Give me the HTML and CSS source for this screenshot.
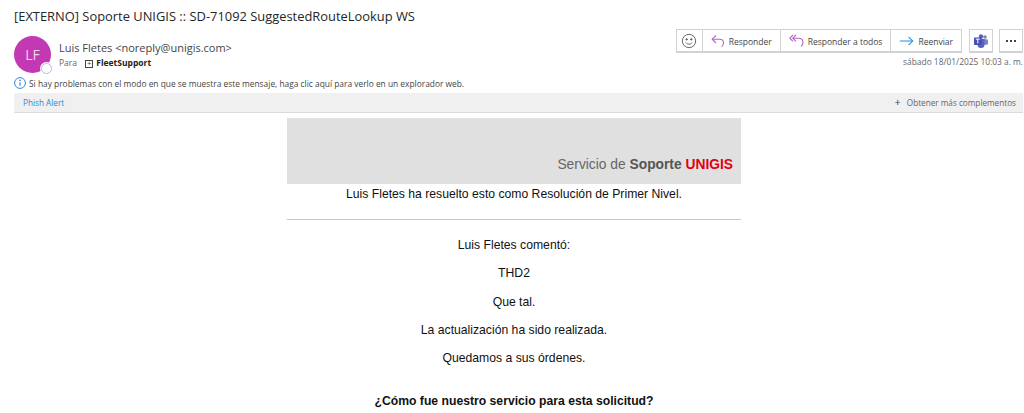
FILE: index.html
```html
<!DOCTYPE html>
<html lang="es">
<head>
    <meta charset="UTF-8">
    <meta name="viewport" content="width=device-width, initial-scale=1.0">
    <title>Soporte UNIGIS</title>
    <link rel="stylesheet" href="styles.css">
</head>
<body>
    <h1 class="subject">[EXTERNO] Soporte UNIGIS :: SD-71092 SuggestedRouteLookup WS</h1>

    <div class="header">
        <div class="sender">
            <div class="avatar">LF<span class="presence"></span></div>
            <div class="sender-info">
                <div class="from">Luis Fletes &lt;noreply@unigis.com&gt;</div>
                <div class="to">Para <span class="expand">+</span><b>FleetSupport</b></div>
            </div>
        </div>
        <div class="actions">
            <div class="toolbar">
                <div class="btn-group">
                    <button class="btn btn-icon">
                        <svg width="16" height="16" viewBox="0 0 18 18" fill="none" stroke="#555" stroke-width="1"><circle cx="9" cy="9" r="7.5"/><circle cx="6.4" cy="7.2" r=".8" fill="#555"/><circle cx="11.6" cy="7.2" r=".8" fill="#555"/><path d="M5.5 10.8c1.8 2.4 5.2 2.4 7 0"/></svg>
                    </button>
                    <button class="btn">
                        <svg width="14" height="14" viewBox="0 0 14 14" fill="none" stroke="#b565c4" stroke-width="1.1"><path d="M5 1.5 1.2 5.2 5 9"/><path d="M1.2 5.2h7.3c2.6 0 4 1.6 4 3.8 0 1.5-.7 2.8-1.9 3.6"/></svg>
                        Responder
                    </button>
                    <button class="btn">
                        <svg width="15" height="14" viewBox="0 0 15 14" fill="none" stroke="#b565c4" stroke-width="1.1"><path d="M4 1 .8 4.2 4 7.4"/><path d="M7 1 3.8 4.2 7 7.4"/><path d="M3.8 4.2h5.7c3 0 4.5 1.8 4.5 4.2 0 1.6-.8 3-2 3.8"/></svg>
                        Responder a todos
                    </button>
                    <button class="btn">
                        <svg width="15" height="14" viewBox="0 0 15 14" fill="none" stroke="#3a96dd" stroke-width="1.1"><path d="M.8 7h13"/><path d="M9.5 2.8 13.8 7l-4.3 4.2"/></svg>
                        Reenviar
                    </button>
                </div>
                <button class="btn btn-single">
                    <svg width="14" height="14" viewBox="0 0 14 14"><circle cx="11" cy="3" r="1.8" fill="#7b83c9"/><rect x="8" y="5.2" width="6" height="5.6" rx="1.4" fill="#7b83c9"/><circle cx="7" cy="2.4" r="2.2" fill="#5a62b8"/><path d="M3.5 5h7v5.5a3.5 3.5 0 0 1-7 0z" fill="#5a62b8"/><rect y="3.4" width="7.6" height="7.6" rx=".8" fill="#464eb8"/><path d="M1.8 5.2h4M3.8 5.2v4.2" stroke="#fff" stroke-width="1"/></svg>
                </button>
                <button class="btn btn-single btn-more">
                    <span></span><span></span><span></span>
                </button>
            </div>
            <div class="date">sábado 18/01/2025 10:03 a. m.</div>
        </div>
    </div>

    <div class="infobar">
        <svg width="12" height="12" viewBox="0 0 12 12" fill="none"><circle cx="6" cy="6" r="5.4" stroke="#2b88d8"/><path d="M6 5.2v3.6" stroke="#2b88d8" stroke-width="1.2"/><circle cx="6" cy="3.4" r=".8" fill="#2b88d8"/></svg>
        Si hay problemas con el modo en que se muestra este mensaje, haga clic aquí para verlo en un explorador web.
    </div>

    <div class="addins">
        <span class="addin-link">Phish Alert</span>
        <span class="addin-more"><span class="plus">+</span>Obtener más complementos</span>
    </div>

    <div class="message">
        <div class="banner">Servicio de <b>Soporte</b> <b class="brand">UNIGIS</b></div>
        <p class="resolved">Luis Fletes ha resuelto esto como Resolución de Primer Nivel.</p>
        <hr class="divider">
        <p>Luis Fletes comentó:</p>
        <p>THD2</p>
        <p>Que tal.</p>
        <p>La actualización ha sido realizada.</p>
        <p>Quedamos a sus órdenes.</p>
        <p class="question">¿Cómo fue nuestro servicio para esta solicitud?</p>
    </div>
</body>
</html>
```

FILE: styles.css
```css
html, body {
    height: 413px;
    overflow: hidden;
}
body {
    margin: 0;
    padding: 6px 0 0 14px;
    background-color: white;
    color: #333;
    font-family: "Open Sans", sans-serif;
}
button {
    font-family: inherit;
    cursor: pointer;
}
.subject {
    margin: 0;
    font-size: 12.9px;
    line-height: 20px;
    font-weight: 400;
    color: #262626;
}
.header {
    display: flex;
    justify-content: space-between;
    height: 47px;
    margin-top: 3px;
}
.sender {
    display: flex;
    padding-top: 7px;
}
.avatar {
    position: relative;
    width: 37px;
    height: 37px;
    border-radius: 50%;
    background-color: #c239b3;
    color: #f3d6ef;
    font-size: 14px;
    line-height: 37px;
    text-align: center;
}
.presence {
    position: absolute;
    right: -1px;
    bottom: -1px;
    width: 9px;
    height: 9px;
    border: 1px solid #a6c4d8;
    border-radius: 50%;
    background-color: white;
    box-shadow: 0 0 0 1px white;
}
.sender-info {
    margin-left: 8px;
    padding-top: 4px;
}
.from {
    font-size: 11px;
    line-height: 15px;
    color: #444;
}
.to {
    margin-top: 1px;
    font-size: 8.5px;
    line-height: 13px;
    color: #666;
}
.to b {
    color: #222;
    font-weight: 700;
}
.expand {
    display: inline-block;
    width: 6px;
    height: 6px;
    margin: 0 3px 0 6px;
    border: 1px solid #444;
    color: #333;
    font-size: 7px;
    line-height: 6px;
    text-align: center;
}
.actions {
    display: flex;
    flex-direction: column;
    align-items: flex-end;
    margin-right: 1px;
}
.toolbar {
    display: flex;
    gap: 6px;
}
.btn-group {
    display: flex;
    height: 21px;
    margin-right: 1px;
    border: 1px solid #d2d2d2;
    border-bottom-width: 2px;
}
.btn {
    display: flex;
    align-items: center;
    gap: 4px;
    height: 100%;
    padding: 1px 8px 0;
    border: none;
    border-left: 1px solid #d2d2d2;
    background-color: white;
    color: #444;
    font-size: 8.5px;
}
.btn:first-child {
    border-left: none;
}
.btn-icon {
    width: 25px;
    justify-content: center;
    padding: 0;
}
.btn-single {
    justify-content: center;
    width: 24px;
    height: 24px;
    padding: 0;
    border: 1px solid #d2d2d2;
    border-bottom-width: 2px;
}
.btn-single:first-child {
    border-left: 1px solid #d2d2d2;
}
.btn-more {
    gap: 2px;
}
.btn-more span {
    width: 2px;
    height: 2px;
    background-color: #444;
}
.date {
    margin-top: 2px;
    font-size: 8.4px;
    line-height: 13px;
    color: #666;
}
.infobar {
    display: flex;
    align-items: center;
    gap: 3px;
    height: 14px;
    font-size: 8.4px;
    color: #444;
}
.addins {
    display: flex;
    justify-content: space-between;
    align-items: center;
    height: 19px;
    margin-top: 3px;
    margin-right: 1px;
    padding: 0 7px 0 9px;
    border-bottom: 1px solid #dcdcdc;
    background-color: #f0f0f0;
    font-size: 8.2px;
}
.addin-link {
    color: #2f8ad0;
}
.addin-more {
    color: #666;
}
.plus {
    margin-right: 6px;
    color: #444;
    font-size: 11px;
    line-height: 8px;
}
.message {
    width: 454px;
    margin: 5px 0 0 273px;
    font-family: "Liberation Sans", Arial, sans-serif;
    font-size: 12.2px;
    line-height: 14px;
    color: #111;
    text-align: center;
}
.message p {
    margin: 0 0 14.3px;
}
.banner {
    height: 66px;
    box-sizing: border-box;
    padding: 39px 8px 0 0;
    background-color: #e0e0e0;
    color: #666;
    font-size: 13.8px;
    line-height: 16px;
    text-align: right;
}
.banner b {
    color: #555;
}
.banner .brand {
    color: #e00012;
}
.message .resolved {
    margin: 3px 0 18px;
}
.divider {
    height: 1px;
    margin: 0 0 18px;
    border: none;
    background-color: #c8c8c8;
}
.message .question {
    margin-top: 29px;
    font-weight: 700;
}
```
